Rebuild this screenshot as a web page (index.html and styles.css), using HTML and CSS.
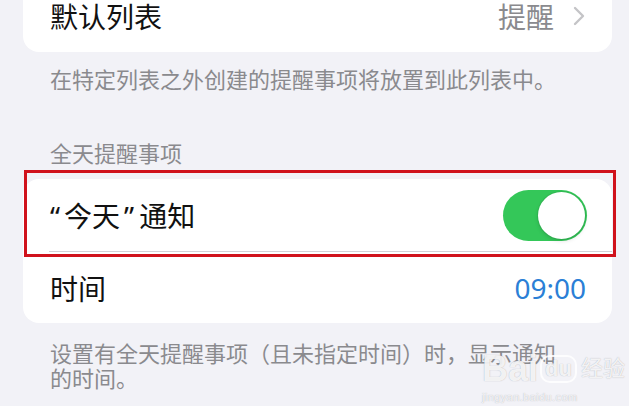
FILE: index.html
```html
<!DOCTYPE html>
<html lang="zh-CN">
<head>
    <meta charset="UTF-8">
    <meta name="viewport" content="width=device-width, initial-scale=1.0">
    <title>提醒事项设置</title>
    <link rel="stylesheet" href="styles.css">
</head>
<body>
    <div class="page">
        <div class="card card-top">
            <div class="row">
                <span class="label">默认列表</span>
                <span class="value">
                    提醒
                    <svg class="chevron" width="12" height="20" viewBox="0 0 12 20">
                        <path d="M2 2 L10 10 L2 18" fill="none" stroke="#c4c4c7" stroke-width="2.4" stroke-linecap="round" stroke-linejoin="round"/>
                    </svg>
                </span>
            </div>
        </div>
        <p class="footer footer-first">在特定列表之外创建的提醒事项将放置到此列表中。</p>

        <p class="header">全天提醒事项</p>
        <div class="card card-marked">
            <div class="row">
                <span class="label"><span class="q-open">“</span>今天<span class="q-close">”</span>通知</span>
                <span class="toggle on"><span class="knob"></span></span>
            </div>
            <div class="separator"></div>
            <div class="row row-last">
                <span class="label">时间</span>
                <span class="time">09:00</span>
            </div>
            <div class="highlight"></div>
        </div>
        <p class="footer footer-last">设置有全天提醒事项（且未指定时间）时，显示通知的时间。</p>
    </div>

    <div class="watermark">
        <div class="wm-logo">
            <span class="wm-bai">Bai</span><span class="wm-du">du</span><span class="wm-jy">经验</span>
        </div>
        <div class="wm-url">jingyan.baidu.com</div>
    </div>
</body>
</html>
```

FILE: styles.css
```css
body {
    margin: 0;
    background-color: #f2f2f7;
    font-family: 'Noto Sans', 'Noto Sans CJK SC', sans-serif;
    overflow: hidden;
    height: 406px;
    position: relative;
}

.page {
    padding: 0 17px 0 23px;
}

.card {
    background: white;
    border-radius: 16px;
}

.card-top {
    margin-top: -20px;
}

.card-marked {
    position: relative;
}

.row {
    display: flex;
    align-items: center;
    justify-content: space-between;
    height: 72px;
    padding: 0 26px 0 27px;
}

.row-last {
    height: 71px;
}

.label {
    font-size: 28px;
    color: #111;
}

.q-open {
    margin-right: 4px;
}

.q-close {
    margin: 0 5px 0 4px;
}

.value {
    display: flex;
    align-items: center;
    gap: 19px;
    font-size: 28px;
    color: #8a8a8e;
    margin-right: 1px;
}

.chevron {
    display: block;
}

.time {
    font-size: 28px;
    color: #2b7fd6;
}

.separator {
    height: 1px;
    margin-left: 26px;
    background-color: #d1d1d6;
}

.toggle {
    position: relative;
    width: 84px;
    height: 51px;
    border-radius: 26px;
    background-color: #dcdce0;
    margin-right: -1px;
}

.toggle.on {
    background-color: #34c759;
}

.knob {
    position: absolute;
    top: 2px;
    right: 2px;
    width: 47px;
    height: 47px;
    border-radius: 50%;
    background: white;
    box-shadow: 0 0 0 1px rgba(0, 0, 0, 0.06), 0 2px 4px rgba(0, 0, 0, 0.12);
}

.footer,
.header {
    margin: 0;
    font-size: 22px;
    line-height: 25px;
    color: #8a8a8e;
    padding-left: 27px;
}

.footer-first {
    padding-top: 15px;
}

.header {
    margin-top: 49px;
    margin-bottom: 13px;
}

.footer-last {
    padding-top: 18px;
    padding-right: 45px;
}

/* red frame drawn over the first row */
.highlight {
    position: absolute;
    top: -9px;
    left: 1px;
    width: 592px;
    height: 87px;
    box-sizing: border-box;
    border: 3px solid #d0121c;
    pointer-events: none;
}

.watermark {
    position: absolute;
    left: 482px;
    top: 350px;
    color: rgba(255, 255, 255, 0.85);
    text-shadow: 0 0 1px rgba(120, 120, 130, 0.6);
    font-family: 'Liberation Sans', 'Noto Sans CJK SC', sans-serif;
}

.wm-logo {
    display: flex;
    align-items: center;
    line-height: 38px;
}

.wm-bai {
    font-size: 36px;
    font-weight: bold;
}

.wm-du {
    font-size: 22px;
    font-weight: bold;
    margin-left: 2px;
    padding: 0 3px;
    border-radius: 10px;
    border: 2px solid rgba(255, 255, 255, 0.85);
    line-height: 24px;
}

.wm-jy {
    font-size: 22px;
    margin-left: 4px;
}

.wm-url {
    font-size: 11px;
    letter-spacing: 0.4px;
    line-height: 14px;
    margin-top: 2px;
}
```
